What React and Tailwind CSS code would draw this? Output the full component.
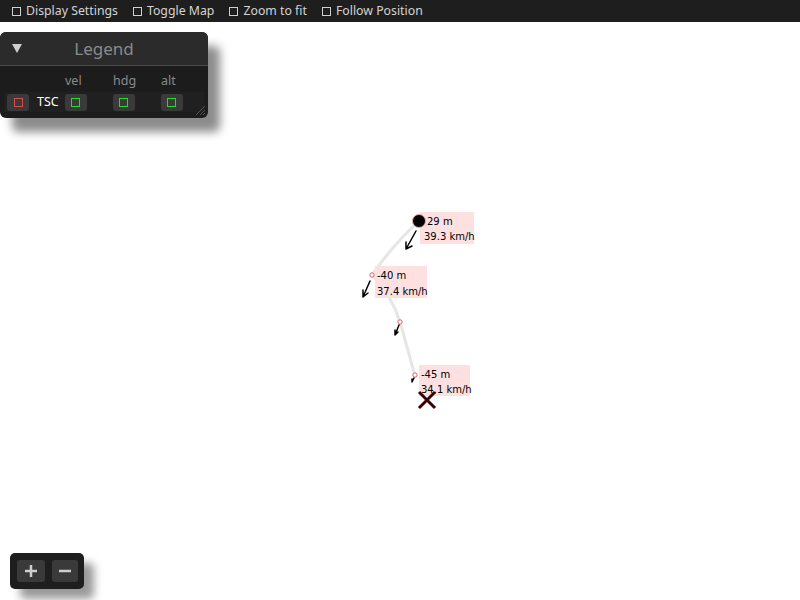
import React from "react";

const Check = () => (
  <span className="inline-block w-[9px] h-[9px] border border-[#cfcfcf] mr-[5px]" />
);

function TopItem({ label, className }) {
  return (
    <div className={"flex items-center " + (className || "")}>
      <Check />
      <span>{label}</span>
    </div>
  );
}

function SqBtn({ color, className }) {
  return (
    <div className={"w-[22px] h-[17px] rounded-[3px] bg-[#3a3a3a] flex items-center justify-center " + (className || "")}>
      <span className={"block w-[9px] h-[9px] border " + color} />
    </div>
  );
}

export default function App() {
  return (
    <div className="w-[800px] h-[600px] bg-white relative overflow-hidden" style={{ fontFamily: '"Noto Sans", sans-serif' }}>
      <div className="h-[22px] bg-[#1e1e1e] flex items-center pl-[12px] text-[12.3px] text-[#d4d4d4]">
        <TopItem label="Display Settings" />
        <TopItem label="Toggle Map" className="ml-[15px]" />
        <TopItem label="Zoom to fit" className="ml-[15px]" />
        <TopItem label="Follow Position" className="ml-[15px]" />
      </div>

      {/* map canvas */}
      <svg className="absolute left-0 top-0" width="800" height="600">
        <path d="M419 221 Q 392 246 372 275 Q 392 296 400 322 Q 408 350 415 376" fill="none" stroke="#e6e6e6" strokeWidth="3" />
        <rect x="420" y="212" width="54" height="32" fill="#ffe0e0" />
        <rect x="375" y="266" width="52" height="32" fill="#ffe0e0" />
        <rect x="419" y="365" width="51" height="31" fill="#ffe0e0" />
        <circle cx="419" cy="221" r="6.5" fill="#000" stroke="#f0a0a0" strokeWidth="1" />
        <circle cx="372" cy="275" r="2.2" fill="#fff" stroke="#e06060" strokeWidth="1" />
        <circle cx="400" cy="322" r="2.2" fill="#fff" stroke="#e06060" strokeWidth="1" />
        <circle cx="415" cy="375" r="2.2" fill="#fff" stroke="#e06060" strokeWidth="1" />
        <g stroke="#000" strokeWidth="1.5" fill="none" strokeLinecap="round">
          <path d="M416 231 L406 249 M406 249 L406 242 M406 249 L412 246" />
          <path d="M370 281 L363 297 M363 297 L363 290 M363 297 L368 293" />
          <path d="M399 325 L395 335 M395 335 L395 330 M395 335 L398 332" />
          <path d="M414 378 L412 382 M412 382 L412 379" />
        </g>
        <g stroke="#3a0000" strokeWidth="3" strokeLinecap="butt">
          <path d="M419 392 L435 408 M435 392 L419 408" />
        </g>
        <g fill="#000" fontSize="10" fontFamily="'DejaVu Sans', sans-serif">
          <text x="427" y="225">29 m</text>
          <text x="424" y="240">39.3 km/h</text>
          <text x="377" y="279">-40 m</text>
          <text x="377" y="295">37.4 km/h</text>
          <text x="421" y="378">-45 m</text>
          <text x="421" y="393">34.1 km/h</text>
        </g>
      </svg>

      {/* legend window */}
      <div className="absolute left-0 top-[32px] w-[208px] h-[86px] rounded-[6px] overflow-hidden bg-[#1c1c1c] shadow-[12px_14px_10px_rgba(0,0,0,0.45)]">
        <div className="h-[34px] bg-[#2b2b2b] border-b border-[#4a4a4a] relative flex items-center justify-center">
          <svg className="absolute left-[12px] top-[11px]" width="11" height="11">
            <path d="M0 1 H10 L5 10 Z" fill="#cfcfcf" />
          </svg>
          <span className="text-[#8a8a8a] text-[17px]">Legend</span>
        </div>
        <div className="relative h-[52px]">
          <div className="absolute left-[65px] top-[6px] text-[12.5px] text-[#8a8a8a]">vel</div>
          <div className="absolute left-[113px] top-[6px] text-[12.5px] text-[#8a8a8a]">hdg</div>
          <div className="absolute left-[161px] top-[6px] text-[12.5px] text-[#8a8a8a]">alt</div>
          <div className="absolute left-[4px] right-[4px] top-[26px] h-[20px] bg-[#202020] flex items-center">
            <SqBtn color="border-[#d05050]" className="ml-[3px]" />
            <span className="ml-[8px] text-[12.5px] text-white">TSC</span>
            <SqBtn color="border-[#22dd22]" className="ml-[6px]" />
            <SqBtn color="border-[#22dd22]" className="ml-[26px]" />
            <SqBtn color="border-[#22dd22]" className="ml-[26px]" />
          </div>
          <svg className="absolute right-[2px] bottom-[2px]" width="12" height="12">
            <path d="M11 2 L2 11 M11 6 L6 11 M11 9 L9 11" stroke="#555" strokeWidth="1" />
          </svg>
        </div>
      </div>

      {/* zoom controls */}
      <div className="absolute left-[10px] top-[553px] w-[74px] h-[36px] rounded-[5px] bg-[#1e1e1e] flex items-center pl-[7px] gap-[7px] shadow-[10px_10px_8px_rgba(0,0,0,0.4)]">
        <div className="w-[28px] h-[22px] rounded-[3px] bg-[#3a3a3a] flex items-center justify-center">
          <svg width="14" height="14"><path d="M7 1 V13 M1 7 H13" stroke="#cfcfcf" strokeWidth="2.5" /></svg>
        </div>
        <div className="w-[26px] h-[22px] rounded-[3px] bg-[#3a3a3a] flex items-center justify-center">
          <svg width="14" height="14"><path d="M1 7 H13" stroke="#cfcfcf" strokeWidth="2.5" /></svg>
        </div>
      </div>
    </div>
  );
}
